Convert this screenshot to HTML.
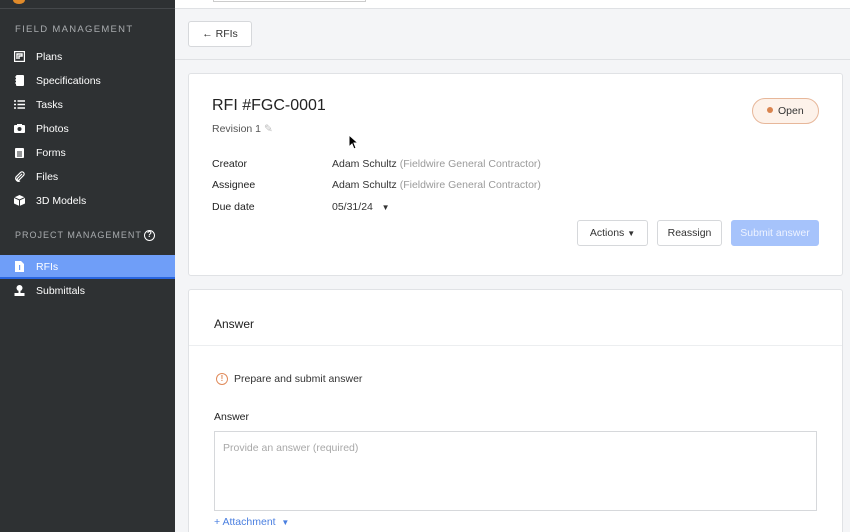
<!DOCTYPE html>
<html><head><meta charset="utf-8"><style>
*{box-sizing:border-box;margin:0;padding:0}
html,body{width:850px;height:532px;overflow:hidden}
body{font-family:"Liberation Sans",sans-serif;background:#f4f5f7;position:relative;color:#2b2b2b}
.sb{position:absolute;left:0;top:0;width:175px;height:532px;background:#2e3133;color:#fff}
.sb .line{position:absolute;top:8px;left:0;right:0;height:1px;background:#45484b}
.sec{position:absolute;left:15px;font-size:9.5px;letter-spacing:1.3px;color:#a9acaf}
.it{position:absolute;left:0;width:175px;height:24px;font-size:10.5px;line-height:24px;padding-left:36px}
.it .ic{position:absolute;left:14px;top:6px;width:11px;height:11px}
.sel{background:#6f9ef8;border-bottom:2px solid #2a66e0}
.top{position:absolute;left:175px;top:0;right:0;height:9px;background:#fff;border-bottom:1px solid #dfe1e4}
.topin{position:absolute;left:38px;top:0;width:153px;height:2px;border:1px solid #ccc;border-top:none}
.hr{position:absolute;left:175px;right:0;top:59px;height:1px;background:#dfe1e4}
.btn{position:absolute;background:#fff;border:1px solid #d6d8db;border-radius:3px;font-size:10.5px;color:#333;text-align:center}
.card{position:absolute;left:188px;width:655px;background:#fff;border:1px solid #e0e2e5;border-radius:3px}
.lbl{position:absolute;left:212px;font-size:10.5px;color:#222}
.val{position:absolute;left:332px;font-size:10.5px;color:#333}
.val span{color:#9a9a9a}
</style></head><body>
<div class="sb">
<div style="position:absolute;left:13px;top:-4px;width:12px;height:8px;border-radius:50%;background:#e08a2a"></div>
<div class="line"></div>
<div class="sec" style="top:24px">FIELD MANAGEMENT</div>
<div class="it" style="top:45px"><svg class="ic" viewBox="0 0 11 11"><rect x="0.5" y="0.5" width="10" height="10" fill="none" stroke="#fff" stroke-width="1.4"/><path d="M3 8V3h5v2H5v3" fill="none" stroke="#fff" stroke-width="1.4"/></svg>Plans</div>
<div class="it" style="top:69px"><svg class="ic" viewBox="0 0 11 11"><rect x="2" y="0" width="8" height="11" rx="1" fill="#fff"/><path d="M1 2h2M1 5h2M1 8h2" stroke="#fff"/></svg>Specifications</div>
<div class="it" style="top:93px"><svg class="ic" viewBox="0 0 11 11"><path d="M0 2h2M0 5.5h2M0 9h2M3.5 2H11M3.5 5.5H11M3.5 9H11" stroke="#fff" stroke-width="1.6"/></svg>Tasks</div>
<div class="it" style="top:117px"><svg class="ic" viewBox="0 0 11 11"><rect x="0" y="2" width="11" height="8" rx="1" fill="#fff"/><rect x="3" y="1" width="5" height="2" fill="#fff"/><circle cx="5.5" cy="6" r="2" fill="#2e3133"/></svg>Photos</div>
<div class="it" style="top:141px"><svg class="ic" viewBox="0 0 11 11"><rect x="1" y="1" width="9" height="10" rx="1" fill="#fff"/><path d="M3 5h5M3 7h5M3 9h5" stroke="#2e3133"/></svg>Forms</div>
<div class="it" style="top:165px"><svg class="ic" viewBox="0 0 11 11"><path d="M8 3L3.5 7.5a1 1 0 0 0 1.5 1.5L9.5 4.5a2 2 0 0 0-3-3L2 6a3 3 0 0 0 4 4" fill="none" stroke="#fff" stroke-width="1.2"/></svg>Files</div>
<div class="it" style="top:189px"><svg class="ic" viewBox="0 0 11 11"><path d="M5.5 0L11 2.5V8.5L5.5 11L0 8.5V2.5z" fill="#fff"/><path d="M0 2.5L5.5 5L11 2.5M5.5 5V11" stroke="#2e3133" fill="none"/></svg>3D Models</div>
<div class="sec" style="top:230px;letter-spacing:1px;font-size:9px">PROJECT MANAGEMENT</div>
<div style="position:absolute;left:144px;top:230px;width:11px;height:11px;border:1.5px solid #fff;border-radius:50%;font-size:8px;line-height:8px;text-align:center;font-weight:bold">?</div>
<div class="it sel" style="top:255px;height:24px"><svg class="ic" viewBox="0 0 11 11"><path d="M1 0h6l3 3v8H1z" fill="#fff"/><rect x="5" y="4" width="1.2" height="5" fill="#6f9ef8"/></svg>RFIs</div>
<div class="it" style="top:279px"><svg class="ic" viewBox="0 0 11 11"><circle cx="5.5" cy="3" r="3" fill="#fff"/><rect x="4.5" y="5" width="2" height="3" fill="#fff"/><rect x="0.5" y="8" width="10" height="3" fill="#fff"/></svg>Submittals</div>
</div>
<div class="top"><div class="topin"></div></div>
<div class="btn" style="left:188px;top:21px;width:64px;height:26px;line-height:24px">← RFIs</div>
<div class="hr"></div>
<div class="card" style="top:73px;height:203px"></div>
<div style="position:absolute;left:212px;top:97px;font-size:16px;color:#222">RFI #FGC-0001</div>
<div style="position:absolute;left:212px;top:123px;font-size:10.5px;color:#555">Revision 1 <span style="color:#bbb">✎</span></div>
<div style="position:absolute;left:752px;top:98px;width:67px;height:26px;border:1px solid #e7b79a;border-radius:13px;background:#fdf2ea;font-size:10.5px;line-height:24px;padding-left:14px;color:#333"><span style="display:inline-block;width:6px;height:6px;border-radius:50%;background:#d9844f;margin-right:5px;vertical-align:1px"></span>Open</div>
<div class="lbl" style="top:158px">Creator</div><div class="val" style="top:158px">Adam Schultz <span>(Fieldwire General Contractor)</span></div>
<div class="lbl" style="top:179px">Assignee</div><div class="val" style="top:179px">Adam Schultz <span>(Fieldwire General Contractor)</span></div>
<div class="lbl" style="top:201px">Due date</div><div class="val" style="top:201px">05/31/24 &nbsp;&nbsp;<span style="color:#333;font-size:8px">▼</span></div>
<div class="btn" style="left:577px;top:220px;width:71px;height:26px;line-height:24px">Actions <span style="font-size:8px">▼</span></div>
<div class="btn" style="left:657px;top:220px;width:65px;height:26px;line-height:24px">Reassign</div>
<div class="btn" style="left:731px;top:220px;width:88px;height:26px;line-height:24px;background:#a6c3fb;border-color:#a6c3fb;color:#eef3ff">Submit answer</div>
<div class="card" style="top:289px;height:260px"></div>
<div style="position:absolute;left:189px;top:345px;width:653px;height:1px;background:#eceef0"></div>
<div style="position:absolute;left:214px;top:317px;font-size:12px;color:#222">Answer</div>
<div style="position:absolute;left:216px;top:373px;width:12px;height:12px;border:1.3px solid #e08a5a;border-radius:50%;font-size:8px;line-height:10px;text-align:center;color:#e08a5a;font-weight:bold">!</div>
<div style="position:absolute;left:234px;top:373px;font-size:10.5px;color:#333">Prepare and submit answer</div>
<div style="position:absolute;left:214px;top:411px;font-size:10.5px;color:#222">Answer</div>
<div style="position:absolute;left:214px;top:431px;width:603px;height:80px;border:1px solid #d6d8db;font-size:10.5px;color:#a8a8a8;padding:10px 8px">Provide an answer (required)</div>
<div style="position:absolute;left:214px;top:516px;font-size:10.5px;color:#4a7fe0">+ Attachment &nbsp;<span style="font-size:8px">▼</span></div>
<svg style="position:absolute;left:348px;top:134px" width="12" height="16" viewBox="0 0 12 16"><path d="M1 1v12l3-3 2 5 2-1-2-5h4z" fill="#000" stroke="#fff" stroke-width="1"/></svg>
</body></html>
